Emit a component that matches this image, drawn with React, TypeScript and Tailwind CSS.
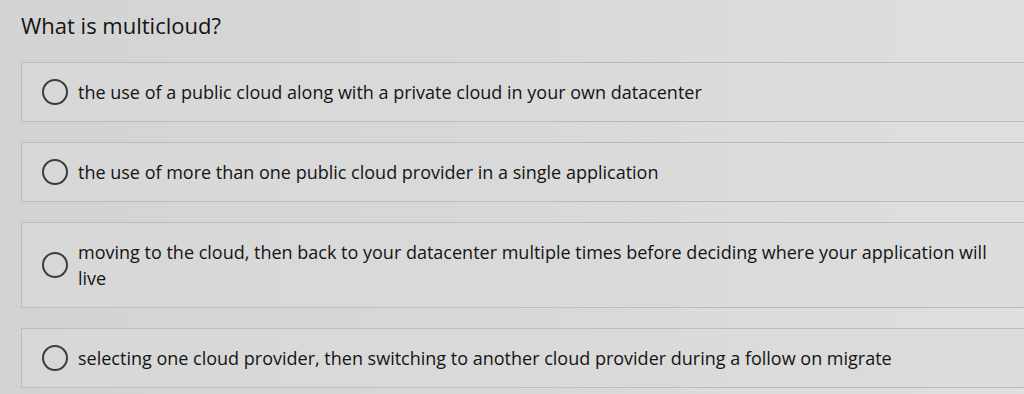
import React from 'react';

const options = [
  'the use of a public cloud along with a private cloud in your own datacenter',
  'the use of more than one public cloud provider in a single application',
  'moving to the cloud, then back to your datacenter multiple times before deciding where your application will live',
  'selecting one cloud provider, then switching to another cloud provider during a follow on migrate',
];

const Radio = () => <span className="w-[26px] h-[26px] shrink-0 rounded-full border-2 border-[#3c3c3c]" />;

const App = () => {
  return <div className="h-[394px] w-[1024px] overflow-hidden bg-linear-to-r from-[#d3d3d3] via-[#d8d8d8] to-[#dfdfdf] text-[#141414]" style={{
    fontFamily: '"Open Sans", "Noto Sans", sans-serif'
  }}>
      <div className="pl-[21px] pt-[10px]">
        <h1 className="text-[22px] leading-[30px] mb-[22px]">What is multicloud?</h1>
        <div className="flex flex-col gap-[20px] w-[1020px]">
          {options.map(text => <div key={text} className="flex items-center gap-[10px] border border-[#bcbcbc] bg-[#dadada]/60 pl-[20px] py-[16px]">
              <Radio />
              <p className="text-[18px] leading-[26px] max-w-[915px]">{text}</p>
            </div>)}
        </div>
      </div>
    </div>;
};
export default App;
